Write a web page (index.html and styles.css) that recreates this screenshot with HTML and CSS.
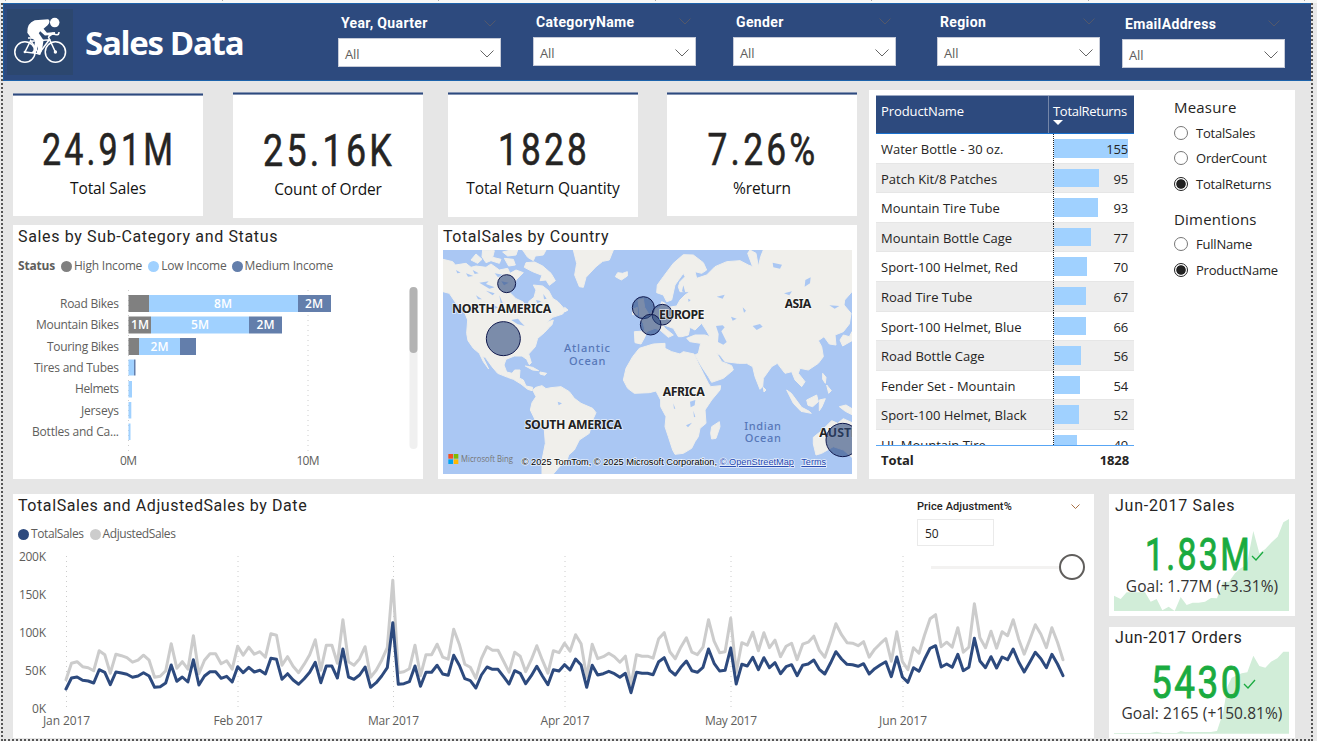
FILE: index.html
```html
<!DOCTYPE html>
<html lang="en">
<head>
<meta charset="utf-8">
<title>Sales Data</title>
<link rel="stylesheet" href="styles.css">
</head>
<body>
<div class="ruler"><i></i><i></i><i></i><i></i><i></i><i></i><i></i></div>
<div class="canvas">
  <header class="banner">
    <div class="logo">
      <svg viewBox="0 0 195 195" width="66" height="66">
        <g fill="none" stroke="#fff" stroke-width="4.5">
          <circle cx="53" cy="127" r="30"/><circle cx="143" cy="127" r="30"/>
          <path d="M53 127 L70 93 L94 132 L53 127 M94 132 L125 91 L70 95 M143 127 L122 82 M62 86h16"/>
          <path d="M122 82 L136 72 Q152 82 154 68" stroke-width="5"/>
        </g>
        <circle cx="53" cy="127" r="4" fill="#fff"/><circle cx="143" cy="127" r="5" fill="#fff"/>
        <circle cx="141" cy="40" r="14" fill="#fff"/>
        <path d="M60 70 Q58 42 82 33 L122 30 Q130 36 120 48 L108 58 L118 70 L142 68 L142 76 L112 78 L98 66 L94 72 L108 92 L103 124 L98 136 L90 134 L92 100 L70 84 Z" fill="#fff"/>
        <path d="M84 90 L78 122 L72 130 L84 130 L96 98Z" fill="#fff"/>
      </svg>
    </div>
    <h1>Sales Data</h1>
    <div class="filter f1"><label>Year, Quarter</label><svg class="tick" viewBox="0 0 12 7"><path d="M.5 .5 6 6 11.500 .5"/></svg><div class="drop"><span>All</span><svg viewBox="0 0 14 8"><path d="M.5 .5 7 7 13.500 .5"/></svg></div></div>
    <div class="filter f2"><label>CategoryName</label><svg class="tick" viewBox="0 0 12 7"><path d="M.5 .5 6 6 11.500 .5"/></svg><div class="drop"><span>All</span><svg viewBox="0 0 14 8"><path d="M.5 .5 7 7 13.500 .5"/></svg></div></div>
    <div class="filter f3"><label>Gender</label><svg class="tick" viewBox="0 0 12 7"><path d="M.5 .5 6 6 11.500 .5"/></svg><div class="drop"><span>All</span><svg viewBox="0 0 14 8"><path d="M.5 .5 7 7 13.500 .5"/></svg></div></div>
    <div class="filter f4"><label>Region</label><svg class="tick" viewBox="0 0 12 7"><path d="M.5 .5 6 6 11.500 .5"/></svg><div class="drop"><span>All</span><svg viewBox="0 0 14 8"><path d="M.5 .5 7 7 13.500 .5"/></svg></div></div>
    <div class="filter f5"><label>EmailAddress</label><svg class="tick" viewBox="0 0 12 7"><path d="M.5 .5 6 6 11.500 .5"/></svg><div class="drop"><span>All</span><svg viewBox="0 0 14 8"><path d="M.5 .5 7 7 13.500 .5"/></svg></div></div>
  </header>

  <div class="upper">
    <div class="left">
      <div class="cards">
        <div class="card c1"><svg class="value" viewBox="0 0 190 56"><text x="96" y="42" textLength="134" lengthAdjust="spacingAndGlyphs">24.91M</text></svg><div class="caption">Total Sales</div></div>
        <div class="card c2"><svg class="value" viewBox="0 0 190 56"><text x="96" y="42" textLength="132" lengthAdjust="spacingAndGlyphs">25.16K</text></svg><div class="caption">Count of Order</div></div>
        <div class="card c3"><svg class="value" viewBox="0 0 190 56"><text x="96" y="42" textLength="92" lengthAdjust="spacingAndGlyphs">1828</text></svg><div class="caption">Total Return Quantity</div></div>
        <div class="card c4"><svg class="value" viewBox="0 0 190 56"><text x="96" y="42" textLength="111" lengthAdjust="spacingAndGlyphs">7.26%</text></svg><div class="caption">%return</div></div>
      </div>
      <div class="charts">
        <section class="panel bars">
          <h2>Sales by Sub-Category and Status</h2>
          <div class="legend"><b>Status</b><i class="dot high"></i>High Income<i class="dot low"></i>Low Income<i class="dot med"></i>Medium Income</div>
          <svg class="plot" viewBox="13 280 410 199">
            <path class="grid" d="M128.500 290V451M308 290V451"/>
            <g class="high"><path d="M128.500 295h20.500v17h-20.500zM128.500 316.500h22.500v17h-22.500zM128.500 338h10.500v17h-10.500z"/></g>
            <g class="low"><path d="M149 295h149v17h-149zM151 316.500h98v17h-98zM139 338h41v17h-41zM128.500 359.500h5.500v16h-5.500zM128.500 381h3.500v16.500h-3.500zM128.500 402h2.800v16.500h-2.800zM128.500 423.500h2v16.500h-2z"/></g>
            <g class="med"><path d="M298 295h33v17h-33zM249 316.500h33v17h-33zM180 338h16v17h-16zM134 359.500h1.500v16h-1.500z"/></g>
            <g class="axis" text-anchor="end">
              <text x="119" y="308" textLength="59">Road Bikes</text><text x="119" y="329" textLength="83">Mountain Bikes</text><text x="119" y="351" textLength="72">Touring Bikes</text><text x="119" y="372" textLength="85">Tires and Tubes</text><text x="119" y="393" textLength="44">Helmets</text><text x="119" y="415" textLength="38">Jerseys</text><text x="119" y="436" textLength="87">Bottles and Ca...</text>
            </g>
            <g class="axis" text-anchor="middle"><text x="128.500" y="465" textLength="17">0M</text><text x="308" y="465" textLength="23">10M</text></g>
            <g class="barlabel" text-anchor="middle"><text x="223" y="308">8M</text><text x="314" y="308">2M</text><text x="140" y="329">1M</text><text x="200" y="329">5M</text><text x="265.500" y="329">2M</text><text x="159.500" y="351">2M</text></g>
            <rect x="409.500" y="287" width="8" height="162" rx="4" fill="#f0f0f0"/><rect x="409.500" y="287" width="8" height="66" rx="4" fill="#b3b3b3"/>
          </svg>
        </section>
        <section class="panel mapbox">
          <h2>TotalSales by Country</h2>
          <svg class="map" viewBox="21 90 1227 672">
            <g class="land">
              <path d="M21 118L50 125 58 135 90 130 105 142 120 138 150 142 165 132 190 150 215 145 222 160 240 150 262 158 240 180 232 205 222 218 240 236 262 246 270 268 280 262 278 245 294 232 300 210 292 195 320 198 338 212 350 235 366 245 388 270 380 282 350 292 330 308 352 300 348 314 340 322 325 338 305 355 298 380 278 402 286 428 280 434 272 418 258 408 235 408 210 418 204 435 212 456 228 460 236 450 252 450 250 474 262 480 270 498 290 502 288 512 275 508 255 492 232 478 215 472 185 460 168 440 148 412 140 410 158 447 142 425 130 400 112 385 96 362 92 340 95 300 80 262 60 250 40 220 21 215Z"/>
              <path d="M140 90L175 92 170 112 195 118 190 130 165 122 150 128 138 110ZM120 102L138 118 125 130 105 120ZM200 96L225 90 245 90 240 105 215 108ZM205 115L232 118 238 135 218 138ZM260 90L330 90 322 105 298 108 292 122 275 112ZM270 128L296 126 320 138 345 160 358 182 340 196 330 180 312 182 318 166 290 155 265 142ZM232 240L248 246 240 254ZM386 262L396 270 386 276Z"/>
              <path d="M412 90L422 130 416 165 430 200 442 202 450 172 480 140 500 124 520 120 532 90ZM538 170L545 158 560 160 574 155 574 168 556 180ZM268 438L290 442 308 452 290 450ZM312 456L332 460 326 466 312 462Z"/>
              <path d="M290 510L300 502 318 497 330 506 345 503 375 500 400 515 415 535 435 550 470 565 480 578 470 600 460 640 430 660 415 690 398 705 392 725 372 738 352 762 318 762 318 720 328 670 325 630 300 605 283 570 288 548 300 530Z"/>
              <path d="M606 240L622 236 626 262 640 285 612 292 610 270ZM590 268L604 262 604 284 590 284Z"/>
              <path d="M632 378L610 385 590 410 570 445 562 480 575 505 595 520 640 518 660 513 674 540 674 560 690 590 687 620 697 650 710 690 717 703 742 700 767 685 777 665 787 650 792 625 810 610 807 570 827 540 852 510 854 497 824 500 817 490 802 460 787 430 774 402 742 395 732 402 707 395 687 385 687 370 652 372Z"/>
              <path d="M827 620L850 605 852 620 840 655 827 657 824 640Z"/>
              <path d="M595 335L627 333 622 310 614 300 632 295 652 270 672 262 677 245 687 250 697 262 722 258 732 240 747 225 762 215 732 215 727 200 732 185 747 170 742 160 717 195 707 240 692 245 682 225 662 218 664 195 682 170 712 130 742 104 772 105 802 128 812 150 797 160 777 155 782 175 812 165 837 140 872 125 912 122 937 135 950 140 935 100 942 90 960 100 967 140 974 110 982 90 1248 90 1248 215 1226 240 1224 255 1245 280 1240 312 1222 335 1197 345 1200 375 1180 372 1164 350 1147 362 1157 380 1162 410 1147 430 1117 450 1092 445 1087 460 1107 485 1097 500 1077 480 1067 455 1047 460 1024 430 1007 440 982 475 980 500 972 508 957 470 950 440 932 430 907 430 867 425 852 405 842 400 857 425 887 437 892 450 862 475 827 487 817 470 797 440 777 405 787 400 794 370 762 365 752 355 777 345 807 345 822 350 810 330 797 310 777 330 762 322 757 345 737 350 727 350 712 325 692 318 677 310 687 325 712 345 697 352 672 330 657 325 632 335 627 350 615 372 597 368Z"/>
              <path d="M1052 510L1066 520 1097 562 1120 574 1126 580 1095 574 1072 550ZM1112 540L1142 525 1147 545 1130 560 1116 556ZM1160 460L1170 472 1168 490 1160 478ZM1172 495L1186 512 1178 520ZM1150 540L1168 536 1158 560 1150 572ZM1210 560L1230 555 1248 566 1248 584 1228 574ZM1212 360L1222 345 1240 350 1248 335 1248 362 1220 378ZM982 502L990 510 984 516Z"/>
              <path d="M1132 652L1157 632 1187 602 1205 610 1222 596 1248 608 1248 712 1222 690 1192 680 1157 700 1140 705 1132 672Z"/>
            </g>
            <g class="water">
              <path d="M840 318L860 316 866 322 856 334 872 366 862 374 846 366 848 342ZM950 318L972 312 980 320 962 330ZM1010 128L1038 134 1032 146 1012 142ZM842 230L866 224 860 236ZM1108 180L1124 172 1122 190 1106 200ZM1044 220L1068 214 1060 226ZM762 545L778 540 776 556 764 562ZM365 545L378 550 368 556ZM130 188L158 184 150 192 176 202 160 206ZM150 212L176 220 170 226ZM190 226L200 248 194 250ZM920 262L930 272 924 278ZM885 290L902 296 890 302ZM1180 256L1210 258 1196 266ZM90 160L112 168 96 170Z"/>
              <path d="M226 300L246 296 254 306 266 318 244 312ZM742 196L748 218 738 214ZM756 236L764 240 758 246Z"/>
              <path d="M60 150L74 158 64 160ZM110 150L128 160 116 162ZM176 160L200 164 186 172ZM196 184L218 188 204 196ZM120 226L138 238 126 238ZM170 254L186 262 178 266ZM300 240L316 244 304 250ZM322 222L332 236 324 238ZM772 572L778 590 774 592ZM750 616L768 608 756 622ZM712 550L718 566 714 566Z"/>
            </g>
            <g class="bubble"><circle cx="212" cy="191" r="27"/><circle cx="202" cy="356" r="51"/><circle cx="622" cy="263" r="33"/><circle cx="679" cy="284" r="31"/><circle cx="644" cy="314" r="31"/></g>
            <g class="continent"><text x="48" y="278" textLength="298">NORTH AMERICA</text><text x="266" y="627" textLength="292">SOUTH AMERICA</text><text x="669" y="296" textLength="136">EUROPE</text><text x="1046" y="265" textLength="80">ASIA</text><text x="680" y="529" textLength="126">AFRICA</text><text x="1150" y="651">AUSTRALIA</text></g>
            <g class="bubble"><circle cx="1220" cy="660" r="50"/></g>
            <g class="ocean"><text x="384" y="397" textLength="138">Atlantic</text><text x="399" y="434" textLength="109">Ocean</text><text x="925" y="630" textLength="110">Indian</text><text x="926" y="667" textLength="109">Ocean</text></g>
            <path fill="#f25022" d="M37 702h14v14h-14z"/><path fill="#7fba00" d="M53 702h14v14h-14z"/><path fill="#00a4ef" d="M37 718h14v14h-14z"/><path fill="#ffb900" d="M53 718h14v14h-14z"/>
            <text class="bing" x="75" y="727" textLength="156" lengthAdjust="spacingAndGlyphs">Microsoft Bing</text>
            <g class="credit"><text x="257" y="735" textLength="586" lengthAdjust="spacingAndGlyphs">© 2025 TomTom, © 2025 Microsoft Corporation,</text><text class="link" x="851" y="735" textLength="223" lengthAdjust="spacingAndGlyphs">© OpenStreetMap</text><text class="link" x="1096" y="735" textLength="74" lengthAdjust="spacingAndGlyphs">Terms</text></g>
          </svg>
        </section>
      </div>
    </div>

    <section class="panel returns">
      <div class="table">
        <div class="thead"><div class="name">ProductName</div><div class="num">TotalReturns<i></i></div></div>
        <div class="tbody" id="rows"></div>
        <div class="tfoot"><span>Total</span><span>1828</span></div>
      </div>
      <div class="choices">
        <h3>Measure</h3>
        <div class="opt"><i></i>TotalSales</div>
        <div class="opt"><i></i>OrderCount</div>
        <div class="opt on"><i></i>TotalReturns</div>
        <h3 class="second">Dimentions</h3>
        <div class="opt"><i></i>FullName</div>
        <div class="opt on"><i></i>ProductName</div>
      </div>
    </section>
  </div>

  <div class="lower">
    <section class="panel trend">
      <h2>TotalSales and AdjustedSales by Date</h2>
      <div class="legend"><i class="dot total"></i>TotalSales<i class="dot adj"></i>AdjustedSales</div>
      <svg class="plot" viewBox="13 546 1081 192">
        <path class="grid" d="M66.500 556V711M238 556V711M393.500 556V711M565 556V711M731 556V711M903 556V711"/>
        <polyline id="adjusted"/><polyline id="total"/>
        <g class="axis" text-anchor="end"><text x="46" y="561" textLength="27">200K</text><text x="46" y="599" textLength="27">150K</text><text x="46" y="637" textLength="27">100K</text><text x="46" y="675" textLength="21">50K</text><text x="46" y="713" textLength="14">0K</text></g>
        <g class="axis" text-anchor="middle"><text x="66.500" y="725" textLength="47">Jan 2017</text><text x="238" y="725" textLength="49">Feb 2017</text><text x="393.500" y="725" textLength="51">Mar 2017</text><text x="565" y="725" textLength="49">Apr 2017</text><text x="731" y="725" textLength="52">May 2017</text><text x="903" y="725" textLength="48">Jun 2017</text></g>
      </svg>
      <div class="adjust">
        <div class="top"><span>Price Adjustment%</span><svg viewBox="0 0 9 6"><path d="M.5 .5 4.500 4.500 8.500 .5"/></svg></div>
        <div class="entry">50</div>
        <div class="slider"><i></i><b></b></div>
      </div>
    </section>
    <div class="kpis">
      <section class="panel kpi k1">
        <svg class="area" viewBox="57 27 558 366"><path d="M72 332L92 342 110 322H165L182 350 200 342 217 376 236 365 254 378 272 336 290 360 308 353H326L345 350 363 339 381 340 399 290 417 290 435 265 452 250 470 240 490 138 508 205 526 192 545 172 563 155 580 112 597 102V378H72Z"/></svg>
        <h2>Jun-2017 Sales</h2>
        <svg class="kv" viewBox="0 0 186 44"><text x="36" y="37" textLength="107" lengthAdjust="spacingAndGlyphs">1.83M</text><path d="M143 23l4 4 7-8"/></svg>
        <div class="goal">Goal: 1.77M (+3.31%)</div>
      </section>
      <section class="panel kpi k2">
        <svg class="area" viewBox="57 426 558 333"><path d="M72 744H180L200 740 217 744H260L272 738 285 741H363L381 738 400 680 412 605 425 578 455 565 472 562 490 512 508 543 526 548 543 530 562 520 580 500H597V746H72Z"/></svg>
        <h2>Jun-2017 Orders</h2>
        <svg class="kv" viewBox="0 0 186 44"><text x="42" y="37" textLength="93" lengthAdjust="spacingAndGlyphs">5430</text><path d="M135 23l4 4 7-8"/></svg>
        <div class="goal">Goal: 2165 (+150.81%)</div>
      </section>
    </div>
  </div>
</div>
<script src="app.js"></script>
</body>
</html>
```
FILE: styles.css
```css
* { box-sizing: border-box; }
body { margin: 0; width: 1317px; height: 741px; overflow: hidden; background: #e9e9e9; font-family: "Open Sans", "Noto Sans", sans-serif; color: #252423; }
h1, h2, h3 { margin: 0; font-weight: normal; }
.ruler { height: 3px; background: #f7f7f6; display: flex; justify-content: space-between; padding: 0 12px 0 5px; }
.ruler i { width: 1px; height: 1px; background: #aaa; }
.canvas { width: 1312px; height: 738px; margin-left: 1px; padding: 0 0 3px; border: 2px dotted #555; border-top: 0; background: #e6e6e6; }

.banner { height: 78px; background: #2d4a7e; border: 1px solid #1d63ab; border-right: 0; border-left: 1px solid #1d5ba0; display: flex; align-items: flex-start; }
.logo { width: 66px; height: 66px; margin: 5px 0 0 3px; background: #2c476f; flex: none; }
.logo svg { display: block; }
h1 { width: 160px; margin: 14px 0 0 12px; color: #fff; font: bold 33px/50px "Open Sans", sans-serif; letter-spacing: -1.3px; white-space: nowrap; flex: none; }
.filter { width: 163px; flex: none; display: grid; grid-template-columns: 1fr 12px; padding-top: 10px; }
.filter label { color: #fff; font: bold 14px/18px Roboto, sans-serif; letter-spacing: .35px; padding-left: 3px; height: 24px; }
.filter .tick { width: 12px; height: 7px; margin: 5px 0 0 -5px; }
.filter path { fill: none; stroke: #53586a; }
.drop { grid-column: 1 / 3; height: 29px; background: #fff; border: 1px solid #c6cbd8; display: flex; align-items: center; justify-content: space-between; padding: 2px 6px 0 6px; font-size: 13px; color: #605e5c; }
.drop span { letter-spacing: -.1px; }
.drop svg { width: 14px; height: 8px; }
.drop path { stroke: #666; }
.f1 { margin-left: 93px; }
.f2 { margin: -1px 0 0 32px; }
.f3 { margin: -1px 0 0 37px; }
.f4 { margin: -1px 0 0 41px; }
.f5 { margin: 1px 0 0 22px; }
.f1 .tick { margin-top: 6px; }

.upper { display: flex; gap: 12px; padding: 9px 0 0 10px; height: 398px; }
.left { width: 844px; flex: none; }
.cards { display: flex; height: 135px; padding-top: 2px; align-items: flex-start; }
.card { width: 190px; height: 126px; background: #fff; border-top: 1px solid #8494b3; box-shadow: inset 0 1px #2d4a7e, inset 0 2px #8494b3; text-align: center; }
.c1 { margin-top: 1px; height: 123px; }
.c2 { margin-left: 30px; }
.c3 { margin-left: 25px; height: 125px; }
.c4 { margin-left: 29px; height: 124px; width: 191px; }
.value { display: block; width: 190px; height: 56px; margin-top: 30px; overflow: visible; }
.value text { font: 43.5px Roboto, sans-serif; fill: #252423; stroke: #252423; stroke-width: .6; text-anchor: middle; letter-spacing: 4px; }
.caption { font-size: 15.500px; line-height: 20px; margin-top: -1px; color: #111; letter-spacing: -.1px; }
.c2 .value { margin-top: 31px; }
.c1 .value { margin-top: 29px; }
.charts { display: flex; gap: 15px; }
.panel { background: #fff; }
.panel h2 { font: 16px/22px Roboto, sans-serif; letter-spacing: .65px; padding: 1px 0 0 5px; height: 22px; white-space: nowrap; }
.bars { width: 410px; height: 254px; }
.legend { display: flex; align-items: center; font-size: 12px; line-height: 16px; letter-spacing: -.2px; color: #605e5c; padding: 11px 0 0 5px; white-space: nowrap; }
.dot { width: 11px; height: 11px; border-radius: 50%; margin: 0 2px 0 6px; flex: none; }
.bars .med { margin-left: 5px; }
.dot:first-child { margin-left: 0; }
.high { background: #808080; fill: #808080; }
.low { background: #a0d1ff; fill: #a0d1ff; }
.med { background: #637eab; fill: #637eab; }
.total { background: #2d4a7e; }
.adj { background: #ccc; }
.plot { display: block; }
.bars .plot { width: 410px; height: 199px; margin-top: 6px; }
.grid { stroke: #ccc; stroke-dasharray: 1 4; fill: none; }
.axis text { font-size: 12px; fill: #605e5c; }
.barlabel text { font-size: 12px; font-weight: 600; fill: #fff; }
.mapbox { width: 419px; height: 254px; }
.mapbox h2 { letter-spacing: .55px; }
.map { display: block; width: 409px; height: 224px; margin: 3px 0 0 5px; background: #aac7f3; }
.land { fill: #f0efeb; stroke: #f0efeb; stroke-width: 3; stroke-linejoin: round; }
.water { fill: #aac7f3; }
.bubble { fill: #2d4a7e; fill-opacity: .6; stroke: #10194d; stroke-width: 3; }
.continent { font: bold 37px "Noto Sans", sans-serif; fill: #222; stroke: #fff; stroke-width: 5; stroke-opacity: .7; paint-order: stroke; }
.ocean { font: 500 33px "Noto Sans", sans-serif; fill: #5777b8; }
.bing { font: 500 27px "Open Sans", sans-serif; fill: #767676; }
.credit { font: 29px "Liberation Sans", sans-serif; fill: #000; stroke: #fff; stroke-width: 5; stroke-opacity: .7; paint-order: stroke; }
.link { fill: #2648b0; text-decoration: underline; }

.returns { width: 426px; flex: none; height: 389px; display: flex; padding: 5px 0 0 7px; }
.table { width: 258px; font-size: 13px; }
.thead { display: flex; height: 39px; background: #2d4a7e; color: #fff; border-bottom: 1px solid #1871cf; border-top: 1px solid #9ba8c2; line-height: 31px; }
.thead .name { width: 173px; padding-left: 5px; border-right: 1px solid #7486a8; letter-spacing: -.1px; }
.thead .num { padding-left: 4px; letter-spacing: -.3px; line-height: 31px; }
.thead i { display: block; margin-top: -7px; border: 5px solid transparent; border-top-color: #fff; width: 0; }
.tbody { height: 311px; overflow: hidden; }
.row { display: flex; height: 29.6px; line-height: 30px; border-bottom: 1px solid #e6e6e6; }
.row:nth-child(even) { background: #ededed; }
.row .name { width: 177px; padding-left: 5px; white-space: nowrap; }
.row .cell { width: 75px; display: grid; border-left: 1px dotted #222; }
.row .bar, .row .v { grid-area: 1 / 1; }
.row .bar { height: 18.500px; background: #a0d1ff; margin-top: 5px; }
.row .v { text-align: right; letter-spacing: -.2px; }
.tfoot { border-top: 1px solid #58a6f5; display: flex; justify-content: space-between; font-weight: bold; line-height: 28px; padding: 0 5px; letter-spacing: -.1px; }
.choices { padding-left: 40px; font-size: 13px; }
.choices h3 { font-size: 15px; line-height: 24px; height: 25px; letter-spacing: .2px; }
.choices .second { margin-top: 10px; height: 25px; }
.opt { display: flex; align-items: center; height: 25.500px; letter-spacing: -.2px; }
.opt i { width: 14px; height: 14px; border: 1px solid #777; border-radius: 50%; margin-right: 8px; background: #fff; flex: none; }
.on i { border-color: #222; background: radial-gradient(circle, #222 4.300px, #fff 5.200px); }

.lower { display: flex; gap: 15px; padding: 15px 0 0 10px; }
.trend { width: 1081px; flex: none; height: 244px; position: relative; }
.trend h2 { letter-spacing: .58px; }
.trend .legend { padding: 10px 0 0 5px; letter-spacing: -.4px; }
.trend .plot { width: 1081px; height: 192px; margin-top: 4px; }
#adjusted, #total { fill: none; stroke: #ccc; stroke-width: 3; stroke-linejoin: round; stroke-linecap: round; }
#total { stroke: #2d4a7e; }
.adjust { position: absolute; left: 904px; top: 0; width: 177px; height: 90px; }
.adjust .top { display: flex; justify-content: space-between; align-items: center; padding: 5px 14px 0 0; font: 500 11px/16px Roboto, sans-serif; letter-spacing: .1px; }
.adjust .top svg { width: 9px; height: 6px; }
.adjust .top path { fill: none; stroke: #a87044; }
.entry { width: 77px; height: 27px; margin-top: 4px; border: 1px solid #eaeaea; font-size: 12px; line-height: 27px; padding-left: 7px; }
.slider { display: flex; align-items: center; margin: 8px 0 0 14px; }
.slider i { width: 128px; height: 3px; background: #f3f2f1; }
.slider b { width: 26px; height: 26px; border: 2px solid #605e5c; border-radius: 50%; background: #fff; }
.kpis { width: 186px; flex: none; }
.kpi { position: relative; height: 122px; text-align: left; }
.kpi.k2 { margin-top: 11px; height: 111px; }
.area { position: absolute; left: 0; top: 0; width: 186px; fill: #d1edd8; }
.k1 .area { height: 122px; }
.k2 .area { height: 111px; }
.kpi h2, .kv, .goal { position: relative; }
.kpi h2 { padding-left: 6px; letter-spacing: .75px; }
.kpi.k2 h2 { padding-top: 0; letter-spacing: .6px; }
.kv { display: block; width: 186px; height: 44px; margin-top: 17px; overflow: visible; }
.k2 .kv { margin-top: 12px; }
.kv text { font: 43.5px Roboto, sans-serif; fill: #1aab40; stroke: #1aab40; stroke-width: .9; letter-spacing: 3px; }
.kv path { fill: none; stroke: #1aab40; stroke-width: 1.300; }
.goal { font-size: 15.500px; line-height: 20px; text-align: center; letter-spacing: .05px; color: #333; margin-top: -1px; white-space: nowrap; }
.k2 .goal { margin-top: -2px; }
```
FILE: app.js
```js
// Vertical plot units, three per pixel, one value per day from Jan 1 to Jun 30.
const daily = [612,579,576,586,588,594,554,562,599,561,564,568,577,573,563,573,607,605,594,540,589,576,591,524,600,573,560,560,580,574,591,
545,563,547,561,556,567,520,523,583,566,585,598,581,562,532,593,543,543,579,492,576,583,570,546,607,593,573,548,
413,598,596,590,543,604,562,562,541,567,571,511,541,581,587,609,570,546,553,553,575,597,557,565,596,572,544,573,599,554,558,
539,555,522,540,607,541,570,566,559,566,577,565,623,562,565,565,569,530,518,556,570,547,528,557,562,547,492,535,558,556,
489,597,538,543,517,554,518,548,533,566,545,539,572,541,537,525,553,567,535,500,522,538,539,544,536,567,551,540,530,575,516,
576,592,548,559,523,490,482,546,537,547,508,557,547,460,528,548,515,549,516,524,492,531,561,532,502,521,548,508,537,572];
const points = f => daily.map((v, i) => (66 + i * 5.539).toFixed(1) + ',' + (485 + f(v) / 3).toFixed(1)).join(' ');
document.getElementById('total').setAttribute('points', points(v => v));
document.getElementById('adjusted').setAttribute('points', points(v => 1.5 * v - 334));

const products = [['Water Bottle - 30 oz.', 155], ['Patch Kit/8 Patches', 95], ['Mountain Tire Tube', 93], ['Mountain Bottle Cage', 77],
  ['Sport-100 Helmet, Red', 70], ['Road Tire Tube', 67], ['Sport-100 Helmet, Blue', 66], ['Road Bottle Cage', 56],
  ['Fender Set - Mountain', 54], ['Sport-100 Helmet, Black', 52], ['HL Mountain Tire', 49]];
document.getElementById('rows').innerHTML = products.map(([name, n]) =>
  `<div class="row"><div class="name">${name}</div><div class="cell"><div class="bar" style="width:${(n / 155 * 100).toFixed(1)}%"></div><div class="v">${n}</div></div></div>`).join('');
```
